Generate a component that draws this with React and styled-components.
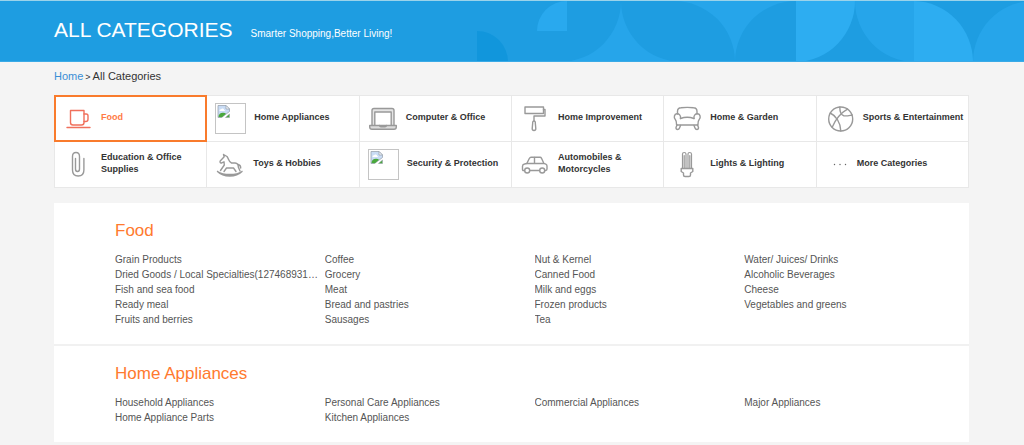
import styled, { createGlobalStyle, css } from "styled-components";

const GlobalStyle = createGlobalStyle`
  * {
    box-sizing: border-box;
  }
  body {
    margin: 0;
    background-color: #f4f4f4;
    font-family: "Liberation Sans", Arial, sans-serif;
    color: #333;
  }
  a {
    color: inherit;
    text-decoration: none;
  }
`;

const Banner = styled.header`
  position: relative;
  display: flex;
  align-items: baseline;
  gap: 18px;
  padding: 17px 54px 19px;
  border-top: 1px solid #9bd3ea;
  border-bottom: 1px solid #3aaae6;
  background-color: #1e9de1;
  color: white;
  overflow: hidden;
`;

const BannerArt = styled.svg`
  position: absolute;
  top: 0;
  right: 0;
  width: 554px;
  height: 100%;
`;

const BannerTitle = styled.h1`
  position: relative;
  margin: 0;
  font-size: 21px;
  line-height: 24px;
  font-weight: 400;
`;

const BannerText = styled.span`
  position: relative;
  font-size: 10px;
`;

const Container = styled.main`
  padding: 0 55px 0 54px;
`;

const Breadcrumb = styled.nav`
  display: flex;
  align-items: baseline;
  gap: 2px;
  padding: 6px 0 11px;
  font-size: 11px;
  line-height: 16px;
`;

const HomeLink = styled.a`
  color: #3a8fd6;
`;

const Separator = styled.span`
  font-size: 9px;
  line-height: 12px;
`;

const CategoryGrid = styled.nav`
  display: grid;
  grid-template-columns: repeat(6, minmax(0, 1fr));
  grid-auto-rows: 45px;
  gap: 1px;
  border: 1px solid #e8e8e8;
  background-color: #e8e8e8;
`;

const Category = styled.a`
  display: flex;
  align-items: center;
  gap: 8px;
  padding-left: 8px;
  background-color: white;
  color: #333;

  ${(props) =>
    props.$active &&
    css`
      color: #ff7a45;
      outline: 2px solid #f97b2c;
      outline-offset: -1px;
      z-index: 1;
    `}
`;

const CategoryName = styled.span`
  padding-bottom: 3px;
  font-size: 9px;
  line-height: 12px;
  font-weight: 700;
`;

const Icon = styled.svg`
  flex: none;
  width: ${(props) => props.$width || 30}px;
  height: 30px;
  fill: none;
  stroke: ${(props) => props.$color || "#999"};
  stroke-width: 1.4;
  stroke-linecap: round;
  stroke-linejoin: round;
`;

const BrokenImage = styled.span`
  flex: none;
  width: 31px;
  height: 31px;
  padding: 1px;
  border: 1px solid #c4c4c4;

  svg {
    display: block;
  }
`;

const Sections = styled.div`
  margin-top: 15px;
`;

const Section = styled.section`
  padding: 18px 15px 17px 61px;
  background-color: white;

  & + & {
    border-top: 2px solid #f1f1f1;
  }
`;

const SectionTitle = styled.h2`
  margin: 0 0 11px;
  font-size: 17px;
  line-height: 20px;
  font-weight: 400;
  color: #ff7a2e;
`;

const LinkList = styled.ul`
  display: grid;
  grid-template-columns: repeat(4, minmax(0, 1fr));
  margin: 0;
  padding: 0;
  list-style: none;
`;

const LinkItem = styled.li`
  padding-right: 4px;
  font-size: 10px;
  line-height: 15px;
  color: #555;
  white-space: nowrap;
  overflow: hidden;
  text-overflow: ellipsis;
`;

function Missing() {
  return (
    <BrokenImage>
      <svg width="14" height="14" viewBox="0 0 14 14">
        <path d="M1 .5h8l3.500 3.500v2.500L4.500 12.500H1z" fill="#c9dcf5" stroke="#9aa3b0" strokeWidth=".8" />
        <path d="M9 .5V4h3.500z" fill="#fff" stroke="#9aa3b0" strokeWidth=".8" />
        <path d="M2.500 6a1.500 1.500 0 0 1 1.500-1.800 1.800 1.800 0 0 1 3.200.8c1 0 1 1 .5 1z" fill="#fff" />
        <path d="M1.500 12c0-3 2.500-4.500 5-4.200 1 0 1.800.4 2.500.9L5 12.200z" fill="#4aa83c" />
        <path d="M12.500 9v3.500H8.500z" fill="#4aa83c" stroke="#9aa3b0" strokeWidth=".6" />
      </svg>
    </BrokenImage>
  );
}

const icons = {
  cup: (
    <Icon viewBox="0 0 30 30" $color="#f0705c">
      <path d="M7.500 6.500h13.500v12q0 2.500-2.500 2.500h-8.500q-2.500 0-2.500-2.500z" />
      <path d="M21 10h2.200q1.800 0 1.800 1.800v3.400q0 2.300-2.300 2.300H21M4 23.500h23" />
    </Icon>
  ),
  laptop: (
    <Icon viewBox="0 0 30 30">
      <path d="M4 21V6.500Q4 4.500 6 4.500h18q2 0 2 2V21" fill="#e4e4e4" />
      <path d="M6.800 21V8h16.400v13" fill="#fff" />
      <path d="M1.700 21.500h26.600v1.500q0 2.300-2.300 2.300H4q-2.300 0-2.300-2.300z" fill="#ddd" />
      <path d="M11.500 21.500q.2 1.300 1.500 1.300h4q1.300 0 1.500-1.300" />
    </Icon>
  ),
  roller: (
    <Icon viewBox="0 0 30 30">
      <path d="M5 3h18.500v6.500H5z" />
      <path d="M23.500 5.500h1.500v6.500H14v5" />
      <path d="M14 17c-1 0-1.500 1-1.300 2l-.5 5.500q0 2 1.800 2t1.800-2L15.300 19c.2-1-.3-2-1.300-2z" />
    </Icon>
  ),
  sofa: (
    <Icon viewBox="0 0 30 30">
      <path d="M5.500 10V7.500Q5.500 4 9 3.800q6.300-.8 12.500 0Q25 4 25 7.500V10" />
      <path d="M8.500 14.500c.5-3-1.500-5-3.700-4.700-2.600.4-3.200 3.600-1.600 5.400 1.400 1.500 1.400 2.800 1.400 5.800h21.300c0-3 0-4.300 1.400-5.800 1.600-1.800 1-5-1.600-5.400-2.200-.3-4.200 1.700-3.700 4.700" />
      <path d="M8.500 14.500q6.700-2.500 13.500 0" />
      <path d="M5 21l-1 2.500q0 2 1.500 2T7.500 24l1-2.500M25.500 21l1 2.500q0 2-1.500 2T23 24l-1-2.500" />
    </Icon>
  ),
  ball: (
    <Icon viewBox="0 0 30 30">
      <circle cx="15.700" cy="15" r="12" />
      <path d="M5.200 9c5.500 2.500 10.500 9.500 10.600 18" />
      <path d="M14.800 3c0 4 1.200 8 4 8.700 2.700.6 5.700-.3 8.400-.7" />
      <path d="M22.500 5.200C16.500 8.500 11 14.500 7.200 23.300" />
    </Icon>
  ),
  clip: (
    <Icon viewBox="0 0 30 30">
      <path d="M12.500 8.500v10.500q0 2.500 2 2.500t2-2.500V6.500q0-4-3.500-4T9.500 6.500V20q0 6 5.700 6t5.700-6V8.500" />
    </Icon>
  ),
  horse: (
    <Icon viewBox="0 0 30 30">
      <path d="M8.500 4.500l.7 2.300-4 4.200q-.7 1.500.9 2.200L9 11.800l.3 3.200-3.800 5.500M8.500 4.500l3.500 2c1.800 2 1.500 5.500 4.500 6.500h3.500c2.500.3 3.500 2 3.300 4l1.700 4" />
      <path d="M9 21.500l2.500-3.500h7l2.500 3.500M23 14.500c1.800.3 2.700 1.800 2.700 3.500" />
      <path d="M2.500 21.500c6 4 18.500 4 24.500 0M2.500 21.500c3.500 3.500 8 4.500 12.200 4.500s8.800-1 12.300-4.500" />
    </Icon>
  ),
  car: (
    <Icon viewBox="0 0 30 30">
      <path d="M4.500 20.500H3.500q-1 0-1-1.200v-3q0-2 2-2.300l2.300-.5 2.500-5Q10 7.300 11 7.300h9q1 0 1.500 1l2.300 5 2 .8q1.200.5 1.200 2v3q0 1.400-1.300 1.400h-.7M10 20.500h9.500" />
      <path d="M6.800 13.500h16.700M14.500 7.500v6" />
      <circle cx="7.200" cy="20.500" r="2.500" />
      <circle cx="22.200" cy="20.500" r="2.500" />
    </Icon>
  ),
  lamp: (
    <Icon viewBox="0 0 30 30">
      <path d="M10.500 18V4q0-1.500 1.700-1.500T14 4v14M16 18V4q0-1.500 1.700-1.500T19.500 4v14M12.200 5.500V18M17.800 5.500V18" strokeWidth="1.200" />
      <path d="M9.200 18.500h11.600v3l-2.300 1.500v2q0 1.500-1.500 1.500h-4q-1.500 0-1.500-1.500v-2l-2.300-1.500z" />
    </Icon>
  ),
  dots: (
    <Icon viewBox="0 0 24 30" $width="24" $color="#666">
      <path d="M9.500 14.500h.01M15 14.500h.01M20.500 14.500h.01" />
    </Icon>
  ),
  missing: <Missing />,
};

const categories = [
  { name: "Food", icon: "cup" },
  { name: "Home Appliances", icon: "missing" },
  { name: "Computer & Office", icon: "laptop" },
  { name: "Home Improvement", icon: "roller" },
  { name: "Home & Garden", icon: "sofa" },
  { name: "Sports & Entertainment", icon: "ball" },
  { name: "Education & Office Supplies", icon: "clip" },
  { name: "Toys & Hobbies", icon: "horse" },
  { name: "Security & Protection", icon: "missing" },
  { name: "Automobiles & Motorcycles", icon: "car" },
  { name: "Lights & Lighting", icon: "lamp" },
  { name: "More Categories", icon: "dots" },
];

const sections = [
  {
    title: "Food",
    links: [
      "Grain Products",
      "Coffee",
      "Nut & Kernel",
      "Water/ Juices/ Drinks",
      "Dried Goods / Local Specialties(127468931775)",
      "Grocery",
      "Canned Food",
      "Alcoholic Beverages",
      "Fish and sea food",
      "Meat",
      "Milk and eggs",
      "Cheese",
      "Ready meal",
      "Bread and pastries",
      "Frozen products",
      "Vegetables and greens",
      "Fruits and berries",
      "Sausages",
      "Tea",
    ],
  },
  {
    title: "Home Appliances",
    links: [
      "Household Appliances",
      "Personal Care Appliances",
      "Commercial Appliances",
      "Major Appliances",
      "Home Appliance Parts",
      "Kitchen Appliances",
    ],
  },
];

function App() {
  return (
    <>
      <GlobalStyle />
      <Banner>
        <BannerArt viewBox="470 1 554 60" preserveAspectRatio="none" aria-hidden="true">
          <path d="M477 31a31 31 0 0 1 31 31h-31z" fill="#1196dc" />
          <path d="M567 1v30h-30a30 30 0 0 1 30-30z" fill="#29a9ee" />
          <path d="M560 62a61 61 0 0 0 61-61 61 61 0 0 0 61 61z" fill="#26a5ea" />
          <path d="M674 1a61 61 0 0 1 61 61 61 61 0 0 1 61-61z" fill="#26a5ea" />
          <path d="M796 1h59a60 61 0 0 1-59 61z" fill="#2dadf1" />
          <path d="M855 1h59v61a60 61 0 0 1-59-61z" fill="#26a5ea" />
          <path d="M914 1a60 61 0 0 1 59 61h-59z" fill="#2dadf1" />
          <path d="M973 62a60 61 0 0 1 59-61v61z" fill="#26a5ea" />
        </BannerArt>
        <BannerTitle>ALL CATEGORIES</BannerTitle>
        <BannerText>Smarter Shopping,Better Living!</BannerText>
      </Banner>
      <Container>
        <Breadcrumb aria-label="Breadcrumb">
          <HomeLink href="#home">Home</HomeLink>
          <Separator>&gt;</Separator>
          <span>All Categories</span>
        </Breadcrumb>
        <CategoryGrid aria-label="Categories">
          {categories.map((category, index) => (
            <Category key={category.name} href="#categories" $active={index === 0}>
              {icons[category.icon]}
              <CategoryName>{category.name}</CategoryName>
            </Category>
          ))}
        </CategoryGrid>
        <Sections>
          {sections.map((section) => (
            <Section key={section.title}>
              <SectionTitle>{section.title}</SectionTitle>
              <LinkList>
                {section.links.map((link) => (
                  <LinkItem key={link}>
                    <a href="#products">{link}</a>
                  </LinkItem>
                ))}
              </LinkList>
            </Section>
          ))}
        </Sections>
      </Container>
    </>
  );
}

export default App;
